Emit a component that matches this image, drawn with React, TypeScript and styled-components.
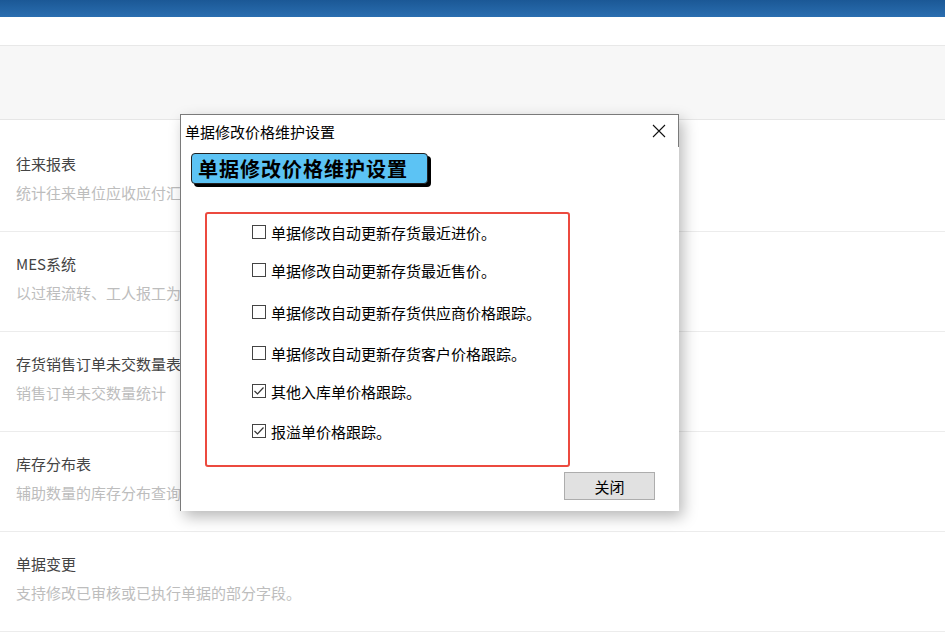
import React from 'react';
import styled, { createGlobalStyle } from 'styled-components';

const GlobalStyle = createGlobalStyle`
  html, body {
    margin: 0;
    padding: 0;
    background: #fff;
    font-family: "Microsoft YaHei", "Noto Sans CJK SC", "Liberation Sans", sans-serif;
  }
`;

const Page = styled.div`
  position: relative;
  width: 945px;
  height: 637px;
  overflow: hidden;
  background: #fff;
`;

const TopBar = styled.div`
  height: 17px;
  background: linear-gradient(#1b5896, #2a6eb0);
`;

const WhiteBand = styled.div`
  height: 28px;
  border-bottom: 1px solid #e8e8e8;
`;

const GrayBand = styled.div`
  height: 73px;
  background: #f7f7f7;
  border-bottom: 1px solid #e6e6e6;
`;

const List = styled.div`
  padding-top: 12px;
`;

const Row = styled.div`
  height: 100px;
  border-bottom: 1px solid #ececec;
  padding: 21px 16px 0;
  box-sizing: border-box;
`;

const RowTitle = styled.div`
  font-size: 15px;
  line-height: 22px;
  color: #444;
`;

const RowDesc = styled.div`
  margin-top: 8px;
  font-size: 15px;
  line-height: 20px;
  color: #bdbdbd;
`;

const Dialog = styled.div`
  position: absolute;
  left: 180px;
  top: 114px;
  width: 499px;
  height: 397px;
  background: #fff;
  border-left: 1px solid #7a7a7a;
  border-top: 1px solid #7a7a7a;
  box-sizing: border-box;
  box-shadow: 4px 6px 14px rgba(0, 0, 0, 0.28);
  display: flex;
  flex-direction: column;
  font-family: "Noto Sans CJK SC", "Liberation Sans", sans-serif;
`;

const TitleBar = styled.div`
  height: 32px;
  display: flex;
  align-items: center;
  justify-content: space-between;
  padding: 0 12px 0 4px;
  border-right: 1px solid #7a7a7a;
  font-size: 15px;
  color: #000;
`;

const CloseX = styled.svg`
  width: 14px;
  height: 14px;
`;

const Body = styled.div`
  flex: 1;
  display: flex;
  flex-direction: column;
  padding: 6px 24px 0 10px;
`;

const Banner = styled.div`
  align-self: flex-start;
  width: 237px;
  height: 31px;
  box-sizing: border-box;
  background: #5cc3f4;
  border: 1px solid #222;
  border-radius: 4px;
  box-shadow: 3px 3px 0 #000;
  padding-left: 6px;
  font-size: 20px;
  font-weight: 700;
  line-height: 29px;
  color: #000;
  letter-spacing: 1px;
  white-space: nowrap;
`;

const OptionBox = styled.div`
  margin: 28px 0 0 14px;
  width: 365px;
  height: 255px;
  box-sizing: border-box;
  border: 2px solid #ec4a3f;
  border-radius: 3px;
  padding: 8px 0 0 45px;
  display: flex;
  flex-direction: column;
`;

const Option = styled.label<{ $space: number }>`
  display: flex;
  align-items: center;
  height: 20px;
  margin-top: ${({ $space }) => $space}px;
  font-size: 15px;
  color: #000;
`;

const Box = styled.span`
  width: 14px;
  height: 14px;
  box-sizing: border-box;
  border: 1px solid #444;
  margin-right: 5px;
  display: flex;
  align-items: center;
  justify-content: center;
  flex-shrink: 0;
`;

const Footer = styled.div`
  display: flex;
  justify-content: flex-end;
  margin-top: 5px;
`;

const Button = styled.button`
  width: 91px;
  height: 28px;
  background: #e1e1e1;
  border: 1px solid #adadad;
  font-family: "Noto Sans CJK SC", sans-serif;
  font-size: 15px;
  color: #000;
  padding: 0;
`;

const rows = [
  { title: '往来报表', desc: '统计往来单位应收应付汇总' },
  { title: 'MES系统', desc: '以过程流转、工人报工为核心' },
  { title: '存货销售订单未交数量表', desc: '销售订单未交数量统计' },
  { title: '库存分布表', desc: '辅助数量的库存分布查询' },
  { title: '单据变更', desc: '支持修改已审核或已执行单据的部分字段。' },
];

const options = [
  { text: '单据修改自动更新存货最近进价。', checked: false, space: 0 },
  { text: '单据修改自动更新存货最近售价。', checked: false, space: 18 },
  { text: '单据修改自动更新存货供应商价格跟踪。', checked: false, space: 22 },
  { text: '单据修改自动更新存货客户价格跟踪。', checked: false, space: 21 },
  { text: '其他入库单价格跟踪。', checked: true, space: 18 },
  { text: '报溢单价格跟踪。', checked: true, space: 20 },
];

function Check({ checked }: { checked: boolean }) {
  return (
    <Box>
      {checked && (
        <svg width="12" height="12" viewBox="0 0 12 12">
          <path d="M1.5 6 L4.5 9 L10.5 2.5" fill="none" stroke="#333" strokeWidth="1.2" />
        </svg>
      )}
    </Box>
  );
}

export default function App() {
  return (
    <Page>
      <GlobalStyle />
      <TopBar />
      <WhiteBand />
      <GrayBand />
      <List>
        {rows.map(r => (
          <Row key={r.title}>
            <RowTitle>{r.title}</RowTitle>
            <RowDesc>{r.desc}</RowDesc>
          </Row>
        ))}
      </List>

      <Dialog>
        <TitleBar>
          <span>单据修改价格维护设置</span>
          <CloseX viewBox="0 0 14 14">
            <path d="M1 1 L13 13 M13 1 L1 13" stroke="#111" strokeWidth="1.1" />
          </CloseX>
        </TitleBar>
        <Body>
          <Banner>单据修改价格维护设置</Banner>
          <OptionBox>
            {options.map(o => (
              <Option key={o.text} $space={o.space}>
                <Check checked={o.checked} />
                {o.text}
              </Option>
            ))}
          </OptionBox>
          <Footer>
            <Button>关闭</Button>
          </Footer>
        </Body>
      </Dialog>
    </Page>
  );
}
